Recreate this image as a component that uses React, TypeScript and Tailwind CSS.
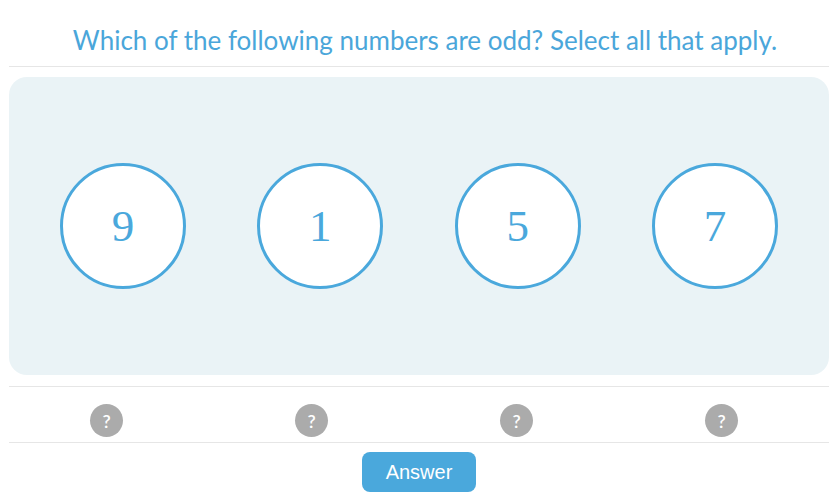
import React from "react";

const NUMBERS = ["9", "1", "5", "7"];

function Choice({ value }: { value: string }) {
  return (
    <button
      type="button"
      className="w-[126px] h-[126px] rounded-full border-[3px] border-[#4aa8dc] bg-white flex items-center justify-center text-[#4aa8dc] text-[45px] leading-none"
      style={{ fontFamily: '"Liberation Serif", "Times New Roman", serif' }}
    >
      {value}
    </button>
  );
}

function HintDot() {
  return (
    <span className="w-[33px] h-[33px] rounded-full bg-[#ababab] text-white flex items-center justify-center text-[18px] font-semibold leading-none">
      ?
    </span>
  );
}

export default function App() {
  return (
    <div className="w-[840px] h-[501px] bg-white overflow-hidden" style={{ fontFamily: 'Lato, "Open Sans", sans-serif' }}>
      <div className="w-[820px] ml-[9px]">
        <h1 className="h-[67px] pt-[25px] pl-[12px] leading-[30px] text-[26px] text-center text-[#4aa6da] border-b border-[#e6e6e6]">
          Which of the following numbers are odd? Select all that apply.
        </h1>

        <div className="mt-[10px] h-[298px] rounded-[18px] bg-[#eaf3f6] px-[51px] flex items-center justify-between">
          {NUMBERS.map((n) => (
            <Choice key={n} value={n} />
          ))}
        </div>

        <div className="mt-[11px] border-t border-b border-[#e6e6e6] pt-[17px] pb-[5px]">
          <div className="grid grid-cols-4 w-[820px] -ml-[5px]">
            {NUMBERS.map((n) => (
              <div key={n} className="flex justify-center">
                <HintDot />
              </div>
            ))}
          </div>
        </div>

        <div className="flex justify-center mt-[9px]">
          <button
            type="button"
            className="w-[114px] h-[40px] rounded-[8px] bg-[#4aa8dc] text-white text-[20px]"
            style={{ fontFamily: '"Liberation Sans", Arial, sans-serif' }}
          >
            Answer
          </button>
        </div>
      </div>
    </div>
  );
}
